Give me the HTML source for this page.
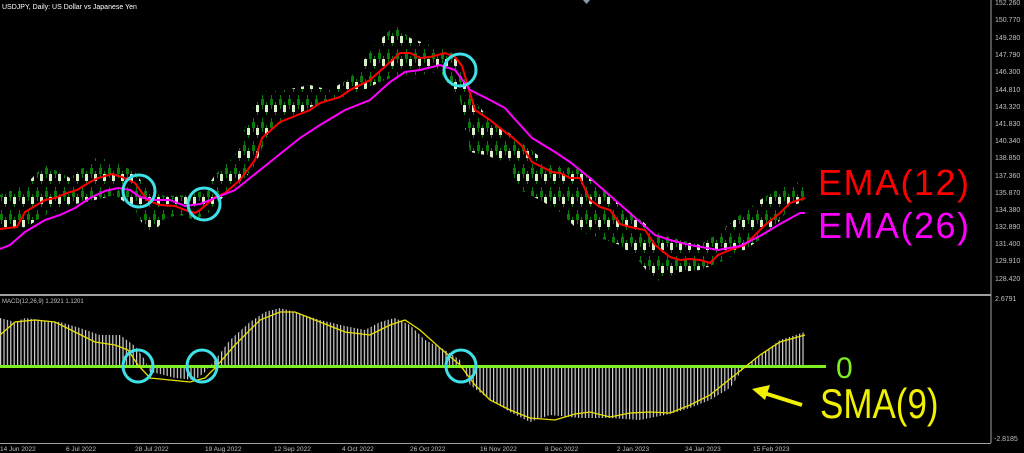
<!DOCTYPE html>
<html><head><meta charset="utf-8"><style>
html,body{margin:0;padding:0;background:#000;width:1024px;height:453px;overflow:hidden}
svg{display:block}
text{font-family:"Liberation Sans","DejaVu Sans",sans-serif}
</style></head><body>
<svg width="1024" height="453" viewBox="0 0 1024 453" xmlns="http://www.w3.org/2000/svg">
<defs>
<pattern id="cdl" width="9" height="23" patternUnits="userSpaceOnUse">
<rect x="1" y="3" width="1" height="14" fill="#0a7a0a"/>
<rect x="0" y="7" width="3" height="6" fill="#0a7a0a"/>
<rect x="5" y="10" width="1" height="13" fill="#0a7a0a"/>
<rect x="4" y="13" width="3" height="7" fill="#d8f0c8"/>
</pattern>
<pattern id="hst" width="3.4" height="10" patternUnits="userSpaceOnUse">
<rect x="0" y="0" width="1.2" height="10" fill="#d0d0d0"/>
</pattern>
</defs>
<rect width="1024" height="453" fill="#000"/>
<text x="2" y="9" font-size="7" fill="#fff">USDJPY, Daily:  US Dollar vs Japanese Yen</text>
<polygon fill="url(#cdl)" points="0,195 25,185 45,165 70,178 95,158 112,160 135,172 147,190 165,196 190,195 205,190 215,175 235,155 250,115 262,92 285,90 310,85 330,90 350,78 375,45 395,25 410,38 430,45 450,50 460,65 470,95 490,120 505,130 525,145 550,165 575,168 595,180 615,200 635,215 655,232 680,240 700,245 720,232 740,215 760,200 780,188 805,180 805,200 790,208 770,232 745,250 720,262 700,270 680,272 655,282 640,262 620,245 600,238 580,232 560,212 540,200 520,190 505,162 485,155 470,152 460,100 440,72 420,75 400,75 380,82 360,92 340,98 315,105 290,118 270,130 255,165 240,185 225,195 210,212 195,220 180,215 165,218 150,238 135,210 115,195 95,200 70,205 45,215 25,228 0,230"/>
<polyline fill="none" stroke="#f00" stroke-width="2" points="0,229 17,227 25,212 45,200 55,198 67,193 77,190 90,182 98,178 112,174 122,177 135,183 147,200 160,205 175,206 185,210 195,213 200,210 215,197 225,193 240,180 255,160 262,138 280,122 310,110 320,103 340,97 350,90 370,80 390,62 400,53 410,53 420,58 430,57 445,53 455,57 462,66 475,110 490,120 505,132 512,137 522,146 532,162 552,172 560,173 570,178 580,178 590,200 600,207 610,210 620,224 630,227 645,230 655,245 670,257 680,260 690,259 700,260 710,263 718,255 730,250 745,245 765,225 780,213 790,203 805,198"/>
<polyline fill="none" stroke="#f0f" stroke-width="2" points="0,249 10,245 25,232 45,220 60,215 75,208 90,198 105,191 118,188 130,190 140,197 155,200 170,200 185,206 200,204 220,196 235,190 260,170 285,150 300,138 320,125 345,110 370,100 390,82 405,72 420,70 440,65 455,70 470,90 490,100 505,108 512,116 532,138 555,152 570,162 590,178 615,200 640,222 655,235 670,240 690,245 718,250 740,246 760,236 780,224 800,213 805,213"/>
<g fill="none" stroke="#3fe0e8" stroke-width="3">
<circle cx="139" cy="191" r="16"/><circle cx="204" cy="204" r="16"/><circle cx="460" cy="70" r="16"/>
</g>
<text x="818" y="195" font-size="36" fill="#f00" letter-spacing="1.5" font-family="DejaVu Sans,sans-serif">EMA(12)</text>
<text x="818" y="238" font-size="36" fill="#f0f" letter-spacing="1.5" font-family="DejaVu Sans,sans-serif">EMA(26)</text>
<rect x="0" y="294" width="991" height="2" fill="#a0a0a0"/>
<line x1="991" y1="0" x2="991" y2="443" stroke="#a0a0a0" stroke-width="1"/>
<line x1="0" y1="443.5" x2="991" y2="443.5" stroke="#a0a0a0" stroke-width="1"/>
<g font-size="7" fill="#c0c0c0">
<text x="995" y="5">152.260</text><text x="995" y="22">150.770</text><text x="995" y="40">149.280</text><text x="995" y="57">147.790</text><text x="995" y="74">146.300</text><text x="995" y="92">144.810</text><text x="995" y="109">143.320</text><text x="995" y="126">141.830</text><text x="995" y="143">140.340</text><text x="995" y="160">138.850</text><text x="995" y="178">137.360</text><text x="995" y="195">135.870</text><text x="995" y="212">134.380</text><text x="995" y="229">132.890</text><text x="995" y="246">131.400</text><text x="995" y="263">129.910</text><text x="995" y="281">128.420</text>
<text x="995" y="301">2.6791</text><text x="994" y="441">-2.8185</text>
</g>
<text x="2" y="303" font-size="6" fill="#c0c0c0">MACD(12,26,9) 1.2921 1.1201</text>
<polygon fill="url(#hst)" points="0,318 15,322 25,318 40,320 60,322 80,328 100,335 120,335 135,346 145,360 150,372 160,374 175,378 195,380 205,372 215,360 230,340 250,322 265,312 280,308 295,312 320,320 345,326 365,330 380,322 395,318 410,325 425,340 445,350 460,360 470,385 490,400 510,412 530,422 550,415 580,418 610,418 640,420 670,414 690,408 710,400 730,388 745,366 760,355 780,340 805,332 805,366 0,366"/>
<line x1="0" y1="366.5" x2="826" y2="366.5" stroke="#7cf020" stroke-width="3"/>
<polyline fill="none" stroke="#e8e000" stroke-width="1.3" points="0,335 15,322 35,320 55,322 75,332 95,342 115,345 128,350 138,365 150,378 170,380 190,382 205,378 215,368 235,345 260,320 280,312 295,312 320,322 345,332 370,335 390,325 405,320 420,330 440,348 460,365 475,385 490,400 510,410 530,418 555,420 575,414 590,412 610,417 630,413 650,412 670,413 690,405 710,395 735,375 760,355 780,342 805,335"/>
<g fill="none" stroke="#3fe0e8" stroke-width="3">
<ellipse cx="138" cy="366" rx="15" ry="16"/><ellipse cx="202" cy="366" rx="15" ry="16"/><ellipse cx="461" cy="366" rx="15" ry="16"/>
</g>
<text x="836" y="378" font-size="30" fill="#7cf020" font-family="DejaVu Sans,sans-serif">0</text>
<text transform="translate(820,418) scale(1.0,1.2)" font-size="35" fill="#f0f000" font-family="DejaVu Sans,sans-serif">SMA(9)</text>
<line x1="802" y1="405" x2="764" y2="393" stroke="#f0f000" stroke-width="4"/>
<polygon fill="#f0f000" points="752,389 770,385 765,400"/>
<g font-size="6.5" fill="#c0c0c0">
<text x="0" y="451">14 Jun 2022</text><text x="66" y="451">6 Jul 2022</text><text x="135" y="451">28 Jul 2022</text><text x="205" y="451">19 Aug 2022</text><text x="274" y="451">12 Sep 2022</text><text x="342" y="451">4 Oct 2022</text><text x="410" y="451">26 Oct 2022</text><text x="480" y="451">16 Nov 2022</text><text x="545" y="451">8 Dec 2022</text><text x="617" y="451">2 Jan 2023</text><text x="685" y="451">24 Jan 2023</text><text x="753" y="451">15 Feb 2023</text>
</g>
<polygon fill="#8899aa" points="583,0 590,0 586.5,4"/>
</svg>
</body></html>
